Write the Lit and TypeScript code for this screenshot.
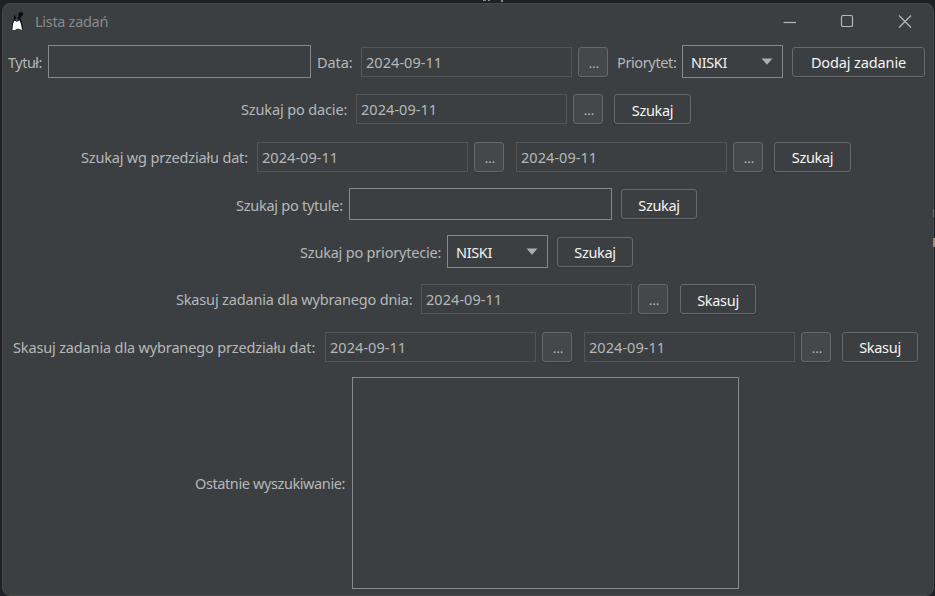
import { LitElement, html, css } from "lit";
import { customElement, property } from "lit/decorators.js";

@customElement("task-label")
class TaskLabel extends LitElement {
  @property() text = "";
  @property({ type: Number }) width = 0;
  @property({ type: Number }) tracking = 0;
  static styles = css`
    :host { display: block; flex: none; height: 30px; margin-top: 2px; font-size: 14.5px; line-height: 31px; color: #b5b8ba; white-space: nowrap; }
    .t { display: block; }
  `;
  render() {
    return html`<span class="t" style="width:${this.width}px;letter-spacing:${this.tracking}px">${this.text}</span>`;
  }
}

@customElement("date-picker")
class DatePicker extends LitElement {
  @property() value = "2024-09-11";
  static styles = css`
    :host { display: flex; flex: none; gap: 6px; margin-top: 2px; height: 30px; }
    .value { box-sizing: border-box; width: 211px; height: 30px; border: 1px solid #535658; padding-left: 4px; font-size: 14.5px; line-height: 29px; letter-spacing: 0.05px; color: #b5b8ba; }
    .more { box-sizing: border-box; width: 30px; height: 30px; border: 1px solid #66696b; border-radius: 3px; background: #44484a; color: #b9bcbe; font-size: 13px; line-height: 30px; text-align: center; padding-left: 2px; box-shadow: 0 1px 1px #35383a; }
  `;
  render() {
    return html`<div class="value">${this.value}</div><div class="more">...</div>`;
  }
}

@customElement("app-root")
class AppRoot extends LitElement {
  static styles = css`
    :host { display: block; position: relative; box-sizing: border-box; width: 935px; height: 596px; padding: 3px 1px 0 2px; overflow: hidden; background: #202126; font-family: "Noto Sans", sans-serif; }
    .behind { position: absolute; background: #8b8c8e; }
    .b1 { left: 483px; top: 0; width: 3px; height: 1px; }
    .b2 { left: 488px; top: 0; width: 2px; height: 1px; }
    .b3 { left: 501px; top: 0; width: 2px; height: 2px; }
    .b4 { left: 933px; top: 209px; width: 1px; height: 8px; background: #7d6b61; }
    .b5 { left: 933px; top: 238px; width: 2px; height: 9px; background: #9a8a80; }
    .window { box-sizing: border-box; height: 593px; border: 1px solid #454749; border-radius: 8px; background: #3c3f41; }
    .bar { display: flex; height: 41px; box-sizing: border-box; padding: 6px 21px 0 8px; }
    .duke { width: 14px; height: 22px; }
    .title { flex: 1; padding-left: 10px; font-size: 14.5px; line-height: 22px; letter-spacing: -0.3px; color: #888b8d; }
    .controls { display: flex; gap: 42px; padding-top: 4px; }
    .controls svg { width: 15px; height: 15px; fill: none; stroke: #b5b7b8; stroke-width: 1.2; }
    .form { display: grid; grid-template-rows: 47px 48px 47px 48px 47px 48px 47px 212px; }
    .row { display: flex; align-items: flex-start; }
    .r1 { padding-left: 5px; } .r2 { padding-left: 238px; } .r3 { padding-left: 78px; } .r4 { padding-left: 233px; }
    .r5 { padding-left: 297px; } .r6 { padding-left: 173px; } .r7 { padding-left: 10px; } .r8 { padding-left: 192px; }
    .g5 { margin-left: 5px; } .g6 { margin-left: 6px; } .g8 { margin-left: 8px; } .g9 { margin-left: 9px; } .g11 { margin-left: 11px; } .g12 { margin-left: 12px; }
    .input, .combo, .area { box-sizing: border-box; flex: none; border: 1px solid #85898b; }
    .input { width: 263px; height: 33px; }
    .short { height: 32px; margin-top: 1px; }
    .combo { display: flex; justify-content: space-between; align-items: center; width: 101px; height: 33px; padding: 0 9px 0 8px; font-size: 14.5px; letter-spacing: -0.35px; line-height: 31px; color: #f2f2f2; }
    .combo span { padding-top: 2px; line-height: 29px; }
    .combo svg { width: 12px; height: 7px; fill: #adb0b2; }
    .btn { box-sizing: border-box; flex: none; height: 30px; margin-top: 2px; border: 1px solid #666a6c; border-radius: 3px; color: #f5f5f5; font-size: 14.5px; letter-spacing: -0.3px; line-height: 28px; text-align: center; width: 76px; box-shadow: 0 1px 1px #35383a; }
    .low .btn { line-height: 30px; }
    .btn.wide { width: 77px; }
    .btn.add { width: 133px; letter-spacing: -0.12px; }
    .r4 task-label { margin-top: 3px; }
    .area { width: 387px; height: 212px; }
    .last { margin-top: 89px; }
  `;

  label(text: string, width: number, tracking: number) {
    return html`<task-label .text=${text} .width=${width} .tracking=${tracking}></task-label>`;
  }

  combo() {
    return html`<div class="combo g6"><span>NISKI</span><svg viewBox="0 0 12 7"><path d="M.5 .5h11L6 6.7z"/></svg></div>`;
  }

  render() {
    return html`
      <i class="behind b1"></i><i class="behind b2"></i><i class="behind b3"></i>
      <div class="window">
        <div class="bar">
          <svg class="duke" viewBox="0 0 14 22">
            <path fill="#08090b" d="M3 4.5 5.5 8 8 6.5 7 3.5 8.3 4 8.3 1.5 9.5 3 10.5 1 11 3 12.5 2.5 11.5 5.5 9.5 7.5 11 13 12 20 10.5 17H2L.8 20 1.2 13 3 9z"/>
            <path fill="#fff" d="M3.2 10.5 6 11.7 8.6 10.3 10 14 11 20 8.5 19 6.2 18.5 4 20 1.5 20 2 14z"/>
            <circle cx="6" cy="9.5" r="1.7" fill="#344157"/>
          </svg>
          <span class="title">Lista zadań</span>
          <div class="controls">
            <svg viewBox="0 0 15 15"><path d="M.5 8.5h12.5"/></svg>
            <svg viewBox="0 0 15 15"><rect x="1.5" y="1.5" width="11" height="11" rx="1.6"/></svg>
            <svg viewBox="0 0 15 15"><path d="M2 1.5l12 12M14 1.5l-12 12"/></svg>
          </div>
        </div>
        <div class="form">
          <div class="row r1">
            ${this.label("Tytuł:", 34, -0.5)}<div class="input g6"></div><div class="g6">${this.label("Data:", 36, -0.1)}</div>
            <date-picker class="g8"></date-picker><div class="g9">${this.label("Priorytet:", 59, -0.38)}</div>${this.combo()}<div class="btn add g9">Dodaj zadanie</div>
          </div>
          <div class="row r2 low">${this.label("Szukaj po dacie:", 107, -0.14)}<date-picker class="g8"></date-picker><div class="btn wide g11">Szukaj</div></div>
          <div class="row r3">${this.label("Szukaj wg przedziału dat:", 168, -0.18)}<date-picker class="g8"></date-picker><date-picker class="g12"></date-picker><div class="btn wide g11">Szukaj</div></div>
          <div class="row r4 low">${this.label("Szukaj po tytule:", 108, -0.26)}<div class="input short g5"></div><div class="btn g9">Szukaj</div></div>
          <div class="row r5">${this.label("Szukaj po priorytecie:", 141, -0.2)}${this.combo()}<div class="btn g9">Szukaj</div></div>
          <div class="row r6 low">${this.label("Skasuj zadania dla wybranego dnia:", 236, -0.17)}<date-picker class="g9"></date-picker><div class="btn g12">Skasuj</div></div>
          <div class="row r7">${this.label("Skasuj zadania dla wybranego przedziału dat:", 303, -0.15)}<date-picker class="g9"></date-picker><date-picker class="g12"></date-picker><div class="btn g11">Skasuj</div></div>
          <div class="row r8"><div class="last">${this.label("Ostatnie wyszukiwanie:", 151, -0.4)}</div><div class="area g6"></div></div>
        </div>
      </div>
      <i class="behind b4"></i><i class="behind b5"></i>
    `;
  }
}
